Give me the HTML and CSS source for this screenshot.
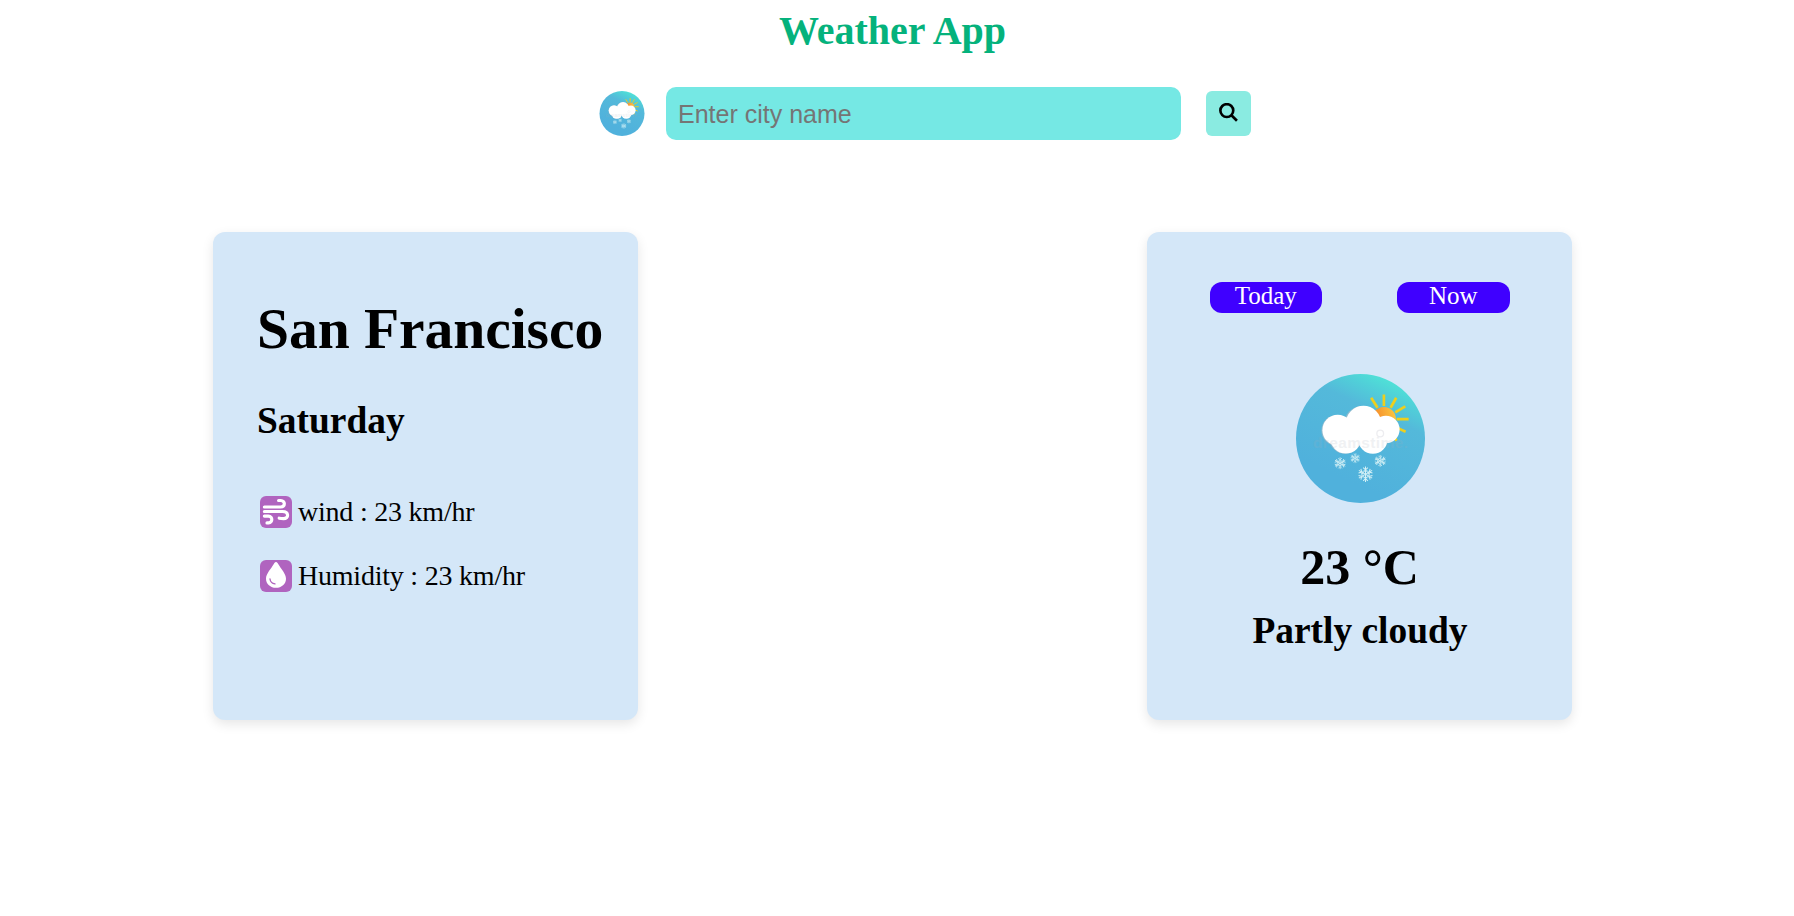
FILE: index.html
```html
<!DOCTYPE html>
<html lang="en">
<head>
<meta charset="utf-8">
<title>Weather App</title>
<link rel="stylesheet" href="styles.css">
</head>
<body>
<svg class="defs" aria-hidden="true">
  <defs>
    <linearGradient id="sky" x1="0.82" y1="0.06" x2="0.45" y2="0.85">
      <stop offset="0" stop-color="#4fe6d6"/>
      <stop offset="0.14" stop-color="#50d2d8"/>
      <stop offset="0.34" stop-color="#54b9da"/>
      <stop offset="1" stop-color="#50b1dc"/>
    </linearGradient>
    <linearGradient id="sun" x1="0" y1="0.6" x2="1" y2="0.3">
      <stop offset="0.15" stop-color="#f58a2c"/>
      <stop offset="1" stop-color="#fbc63f"/>
    </linearGradient>
    <g id="flake" fill="none" stroke="#d5f1f6" stroke-width="3">
      <g id="arm"><path d="M0-23V23M-7-20L0-13L7-20M-7 20L0 13L7 20M-5-12L0-7L5-12M-5 12L0 7L5 12"/></g>
      <use href="#arm" transform="rotate(60)"/>
      <use href="#arm" transform="rotate(120)"/>
    </g>
    <symbol id="weather" viewBox="47 40 386 386">
      <circle cx="240" cy="233" r="193" fill="url(#sky)"/>
      <path d="M310 101V136M272 111L291 141M347 111L330 141M374 137L344 155M348 175H384M352 202L375 213M338 225L348 240" stroke="#eecf1d" stroke-width="8"/>
      <circle cx="310" cy="175" r="36" fill="url(#sun)"/>
      <g fill="#a9bcc9" opacity="0.7" transform="translate(-3 1)">
        <circle cx="172" cy="208" r="46"/><circle cx="247" cy="188" r="53"/><circle cx="196" cy="232" r="46"/>
      </g>
      <g fill="#fff">
        <circle cx="172" cy="208" r="46"/><circle cx="249" cy="188" r="53"/>
        <circle cx="316" cy="206" r="41"/><circle cx="196" cy="231" r="47"/>
        <circle cx="277" cy="235" r="44"/><path d="M172 180H310V235H235L172 230Z"/>
      </g>
      <text class="mark" x="98" y="260" textLength="284">dreamstime.</text>
      <circle cx="299" cy="218" r="10" fill="none" stroke="#ededf0" stroke-width="4"/>
      <use href="#flake" transform="translate(255 340)"/>
      <use href="#flake" transform="translate(179 307) scale(.77)"/>
      <use href="#flake" transform="translate(224 292) scale(.64)"/>
      <use href="#flake" transform="translate(299 300) scale(.77)"/>
    </symbol>
  </defs>
</svg>
<h1 class="title">Weather App</h1>
<form class="search">
  <svg class="logo"><use href="#weather"/></svg>
  <input class="search-input" type="text" placeholder="Enter city name">
  <button class="search-button" type="button" aria-label="Search">
    <svg class="search-icon" viewBox="0 0 18 18"><circle cx="7.4" cy="7.2" r="6.1"/><path d="M11.8 11.6L17 16.8"/></svg>
  </button>
</form>
<main class="cards">
  <section class="card card-city">
    <h2 class="city">San Francisco</h2>
    <h3 class="day">Saturday</h3>
    <div class="stat">
      <svg class="stat-icon" viewBox="0 0 32 32"><rect width="32" height="32" rx="6" fill="#b064bf"/><g class="gust"><path d="M4.4 11H20.5C25.6 11 25.5 4.5 20.8 4.5H18.6"/><path d="M4.4 15.5H22.5C29 15.5 29.2 22.6 23.5 22.6Q21 22.6 19.2 22.2"/><path d="M4.4 20.1H8.5C13 20.1 12.7 26.9 8.7 26.9H7"/></g></svg>
      <span>wind : 23 km/hr</span>
    </div>
    <div class="stat">
      <svg class="stat-icon" viewBox="0 0 32 32"><rect width="32" height="32" rx="6" fill="#b064bf"/><path d="M16 2C17.2 2 17.6 3 18.2 4C21 9 26 13.7 26 18.7C26 24 21.5 27.8 16 27.8S6 24 6 18.7C6 13.7 11 9 13.8 4C14.4 3 14.8 2 16 2Z" fill="#fff"/><path d="M10 19Q10.5 23.3 15 23.9" fill="none" stroke="#b064bf" stroke-width="1.3" stroke-linecap="round"/></svg>
      <span>Humidity : 23 km/hr</span>
    </div>
  </section>
  <section class="card card-now">
    <div class="pills"><span class="pill">Today</span><span class="pill">Now</span></div>
    <svg class="picture"><use href="#weather"/></svg>
    <h2 class="temp">23 °C</h2>
    <h3 class="condition">Partly cloudy</h3>
  </section>
</main>
</body>
</html>
```

FILE: styles.css
```css
* {
  box-sizing: border-box;
}
body {
  min-height: 100vh;
  margin: 0;
  padding-top: 8px;
  background: #fff;
  color: #000;
  font-family: "Liberation Serif", "Times New Roman", serif;
}
h1, h2, h3 {
  margin: 0;
}
.defs {
  position: absolute;
  width: 0;
  height: 0;
}
.mark {
  font: bold 46px "Liberation Sans", Arial, sans-serif;
  fill: #a4adba;
  opacity: 0.16;
}
.title {
  padding-right: 9px;
  color: #05b27c;
  font-size: 40px;
  line-height: 46px;
  text-align: center;
}
.search {
  display: flex;
  align-items: center;
  margin: 33px 0 0 599px;
}
.logo {
  width: 46px;
  height: 45px;
}
.search-input {
  width: 515px;
  height: 53px;
  margin: 0 25px 0 21px;
  padding: 1px 12px 0;
  border: 0;
  border-radius: 10px;
  background: #75e8e4;
  font: 25px "Liberation Sans", Arial, sans-serif;
}
.search-input::placeholder {
  color: #757575;
}
.search-button {
  display: flex;
  width: 45px;
  height: 45px;
  padding: 12px 0 0 13px;
  border: 0;
  border-radius: 6px;
  background: #8aebe1;
}
.search-icon {
  width: 19px;
  height: 19px;
  fill: none;
  stroke: #000;
  stroke-width: 2.5;
}
.cards {
  display: flex;
  justify-content: space-between;
  margin-top: 92px;
  padding: 0 222px 40px 213px;
}
.card {
  width: 425px;
  height: 488px;
  border-radius: 12px;
  background: #d4e7f8;
  box-shadow: 0 4px 12px rgba(0, 0, 0, 0.1);
}
.card-city {
  padding: 65px 0 0 44px;
}
.city {
  font-size: 57.6px;
  line-height: 64px;
  letter-spacing: -0.08px;
  white-space: nowrap;
}
.day {
  margin: 38px 0 54px;
  font-size: 37.44px;
  line-height: 43px;
}
.stat {
  display: flex;
  gap: 6px;
  margin: 0 0 32px 3px;
  font-size: 28px;
  line-height: 32px;
  letter-spacing: -0.22px;
}
.stat-icon {
  width: 32px;
  height: 32px;
}
.gust {
  fill: none;
  stroke: #fff;
  stroke-width: 3.2;
  stroke-linecap: round;
}
.card-now {
  display: flex;
  flex-direction: column;
  align-items: center;
  padding-top: 50px;
}
.pills {
  display: flex;
  gap: 75px;
}
.pill {
  width: 112.5px;
  height: 31px;
  border-radius: 12px;
  background: #3f00ff;
  color: #fff;
  font-size: 25px;
  line-height: 28px;
  text-align: center;
}
.picture {
  width: 129px;
  height: 129px;
  margin: 61px 0 36px 1px;
}
.temp {
  font-size: 50px;
  line-height: 56px;
}
.condition {
  margin: 14px 0 0 1px;
  font-size: 37.44px;
  line-height: 43px;
}
```
